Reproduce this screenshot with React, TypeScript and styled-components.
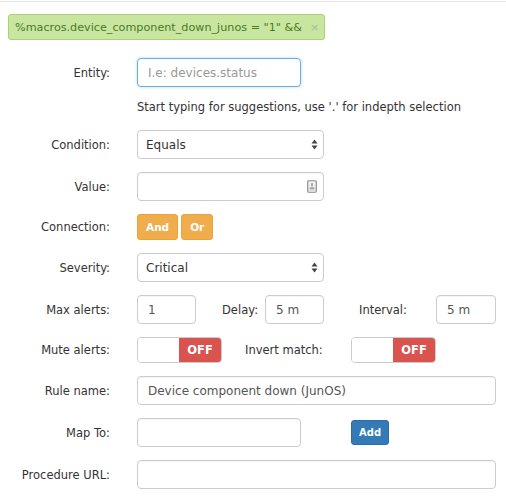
import React from "react";
import styled, { createGlobalStyle } from "styled-components";

const GlobalStyle = createGlobalStyle`
    body {
        margin: 0;
        background: #ffffff;
        font-family: "DejaVu Sans", Verdana, sans-serif;
        font-size: 11px;
        color: #333333;
    }
`;

const Page = styled.div`
    width: 506px;
    border-top: 1px solid #e4e4e4;
    margin-top: 1px;
    padding: 12px 10px 0 8px;
    box-sizing: border-box;
`;

const TagBar = styled.div`
    display: flex;
    margin-bottom: 18px;
`;

const Tag = styled.span`
    display: inline-flex;
    align-items: center;
    height: 26px;
    box-sizing: border-box;
    padding: 0 5px 0 6px;
    background: #c9e6a1;
    border: 1px solid #a6d46e;
    border-radius: 3px;
    color: #4d7a1c;
    font-size: 11.2px;
    white-space: nowrap;
`;

const TagRemove = styled.span`
    margin-left: 8px;
    color: #a9b9a0;
    font-size: 11px;
`;

const Form = styled.form`
    display: flex;
    flex-direction: column;
`;

const Row = styled.div<{ $gap?: number }>`
    display: flex;
    align-items: center;
    margin-bottom: ${({ $gap }) => ($gap ?? 13)}px;
`;

const Label = styled.label`
    width: 102px;
    flex-shrink: 0;
    margin-right: 27px;
    text-align: right;
    font-size: 11.5px;
    color: #333;
`;

const InlineLabel = styled.label<{ $width: number; $align?: string }>`
    width: ${({ $width }) => $width}px;
    flex-shrink: 0;
    text-align: ${({ $align }) => $align ?? "left"};
    font-size: 11.5px;
    color: #333;
`;

const Input = styled.input<{ $width?: number; $focus?: boolean }>`
    box-sizing: border-box;
    width: ${({ $width }) => ($width ? `${$width}px` : "auto")};
    ${({ $width }) => (!$width ? "flex: 1;" : "")}
    height: 29px;
    padding: 0 10px;
    border: 1px solid ${({ $focus }) => ($focus ? "#66afe9" : "#cccccc")};
    border-radius: 4px;
    font-family: "DejaVu Sans", Verdana, sans-serif;
    font-size: 12px;
    color: #555;
    background: #fff;
    outline: none;
    box-shadow: ${({ $focus }) => ($focus ? "0 0 3px rgba(102, 175, 233, 0.5)" : "inset 0 1px 1px rgba(0,0,0,0.04)")};

    &::placeholder {
        color: #999;
    }
`;

const Help = styled.div`
    margin: 11px 0 13px 129px;
    line-height: 19px;
    font-size: 11.5px;
    color: #333;
`;

const FieldBox = styled.div<{ $width: number }>`
    position: relative;
    width: ${({ $width }) => $width}px;
    display: flex;
`;

const SelectBox = styled.div`
    box-sizing: border-box;
    width: 187px;
    height: 29px;
    display: flex;
    align-items: center;
    justify-content: space-between;
    padding: 0 5px 0 8px;
    border: 1px solid #cccccc;
    border-radius: 4px;
    font-size: 12px;
    color: #333;
`;

const FieldIcon = styled.span`
    position: absolute;
    right: 7px;
    top: 8px;
    display: flex;
`;

const Button = styled.button<{ $variant: "warning" | "primary" }>`
    height: ${({ $variant }) => ($variant === "warning" ? 26 : 25)}px;
    padding: 0 ${({ $variant }) => ($variant === "warning" ? 8 : 7)}px;
    margin-right: 3px;
    border-radius: 3px;
    border: 1px solid ${({ $variant }) => ($variant === "warning" ? "#eea236" : "#2e6da4")};
    background: ${({ $variant }) => ($variant === "warning" ? "#f0ad4e" : "#337ab7")};
    color: #fff;
    font-family: "DejaVu Sans", Verdana, sans-serif;
    font-weight: bold;
    font-size: ${({ $variant }) => ($variant === "warning" ? 10.5 : 10)}px;
    cursor: pointer;
`;

const Toggle = styled.div`
    box-sizing: border-box;
    width: 85px;
    height: 26px;
    display: flex;
    border: 1px solid #cccccc;
    border-radius: 4px;
    overflow: hidden;
`;

const ToggleHandle = styled.span`
    flex: 1;
    background: #fff;
`;

const ToggleOff = styled.span`
    width: 42px;
    display: flex;
    align-items: center;
    justify-content: center;
    background: #d9534f;
    color: #fff;
    font-weight: bold;
    font-size: 11.5px;
`;

const Spacer = styled.span<{ $width: number }>`
    width: ${({ $width }) => $width}px;
    flex-shrink: 0;
`;

function SelectArrows() {
    return (
        <svg width="7" height="11" viewBox="0 0 7 11">
            <path d="M3.5 0.5 L6.5 4.5 L0.5 4.5 Z" fill="#444" />
            <path d="M3.5 10.5 L6.5 6.5 L0.5 6.5 Z" fill="#444" />
        </svg>
    );
}

function ContactIcon() {
    return (
        <svg width="10" height="13" viewBox="0 0 10 13">
            <rect x="0.75" y="0.75" width="8.5" height="11.5" rx="1" fill="#f4f4f4" stroke="#8a8a8a" strokeWidth="1.2" />
            <rect x="4.3" y="3" width="1.4" height="3.4" fill="#8a8a8a" />
            <rect x="2.6" y="7.4" width="4.8" height="1.3" fill="#8a8a8a" />
            <rect x="2.6" y="9.4" width="4.8" height="0.9" fill="#b0b0b0" />
        </svg>
    );
}

function OffSwitch() {
    return (
        <Toggle>
            <ToggleHandle />
            <ToggleOff>OFF</ToggleOff>
        </Toggle>
    );
}

export default function App() {
    return (
        <>
            <GlobalStyle />
            <Page>
                <TagBar>
                    <Tag>
                        %macros.device_component_down_junos = "1" &amp;&amp;
                        <TagRemove>×</TagRemove>
                    </Tag>
                </TagBar>
                <Form onSubmit={(e) => e.preventDefault()}>
                    <Row $gap={0}>
                        <Label>Entity:</Label>
                        <Input $width={164} $focus placeholder="I.e: devices.status" />
                    </Row>
                    <Help>Start typing for suggestions, use '.' for indepth selection</Help>
                    <Row>
                        <Label>Condition:</Label>
                        <SelectBox>
                            Equals
                            <SelectArrows />
                        </SelectBox>
                    </Row>
                    <Row>
                        <Label>Value:</Label>
                        <FieldBox $width={187}>
                            <Input />
                            <FieldIcon>
                                <ContactIcon />
                            </FieldIcon>
                        </FieldBox>
                    </Row>
                    <Row>
                        <Label>Connection:</Label>
                        <Button type="button" $variant="warning">And</Button>
                        <Button type="button" $variant="warning">Or</Button>
                    </Row>
                    <Row>
                        <Label>Severity:</Label>
                        <SelectBox>
                            Critical
                            <SelectArrows />
                        </SelectBox>
                    </Row>
                    <Row>
                        <Label>Max alerts:</Label>
                        <Input $width={59} defaultValue="1" />
                        <Spacer $width={26} />
                        <InlineLabel $width={43}>Delay:</InlineLabel>
                        <Input $width={59} defaultValue="5 m" />
                        <Spacer $width={35} />
                        <InlineLabel $width={77}>Interval:</InlineLabel>
                        <Input $width={60} defaultValue="5 m" />
                    </Row>
                    <Row>
                        <Label>Mute alerts:</Label>
                        <OffSwitch />
                        <Spacer $width={23} />
                        <InlineLabel $width={106}>Invert match:</InlineLabel>
                        <OffSwitch />
                    </Row>
                    <Row>
                        <Label>Rule name:</Label>
                        <Input defaultValue="Device component down (JunOS)" />
                    </Row>
                    <Row>
                        <Label>Map To:</Label>
                        <Input $width={164} />
                        <Spacer $width={50} />
                        <Button type="button" $variant="primary">Add</Button>
                    </Row>
                    <Row>
                        <Label>Procedure URL:</Label>
                        <Input />
                    </Row>
                </Form>
            </Page>
        </>
    );
}
